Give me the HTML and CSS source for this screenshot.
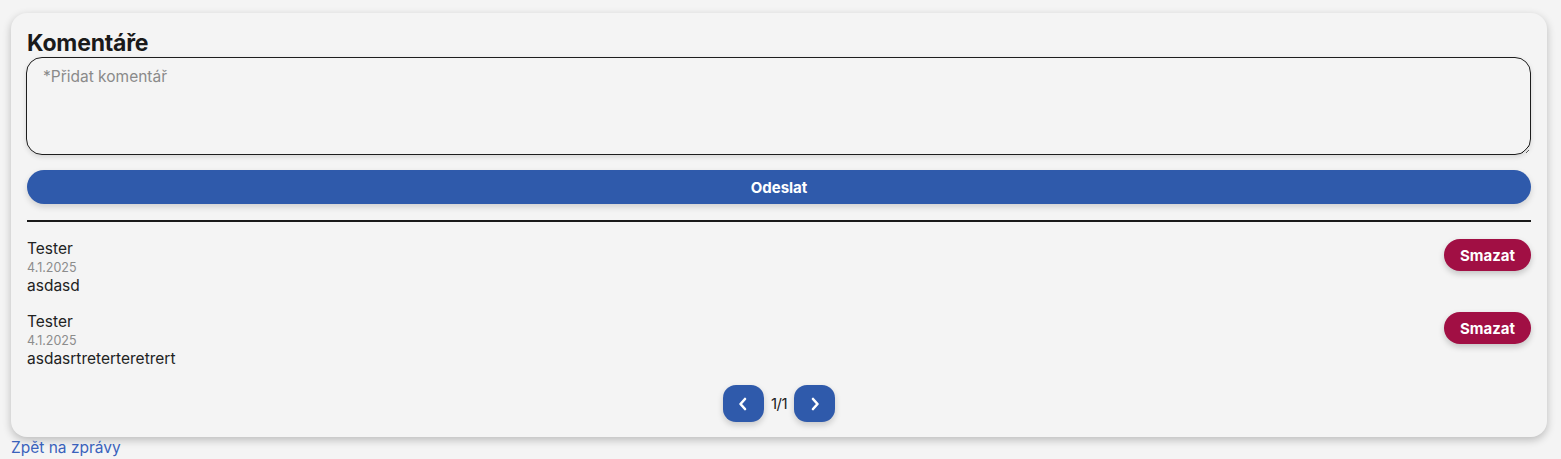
FILE: index.html
```html
<!DOCTYPE html>
<html lang="cs">
<head>
<meta charset="utf-8">
<title>Komentáře</title>
<link rel="stylesheet" href="styles.css">
</head>
<body>
<div class="page">
  <section class="card">
    <h2 class="title">Komentáře</h2>
    <textarea class="input" placeholder="*Přidat komentář"></textarea>
    <button class="send">Odeslat</button>
    <hr class="divider">
    <div class="comments">
      <div class="comment">
        <div class="meta">
          <div class="author">Tester</div>
          <div class="date">4.1.2025</div>
          <div class="text">asdasd</div>
        </div>
        <button class="delete">Smazat</button>
      </div>
      <div class="comment">
        <div class="meta">
          <div class="author">Tester</div>
          <div class="date">4.1.2025</div>
          <div class="text">asdasrtreterteretrert</div>
        </div>
        <button class="delete">Smazat</button>
      </div>
    </div>
    <div class="pager">
      <button class="pbtn" aria-label="Předchozí">
        <svg width="12" height="14" viewBox="0 0 12 14"><path d="M8 2 L3.5 7 L8 12" fill="none" stroke="#fff" stroke-width="2.6" stroke-linecap="round" stroke-linejoin="round"/></svg>
      </button>
      <span class="pinfo">1/1</span>
      <button class="pbtn" aria-label="Další">
        <svg width="12" height="14" viewBox="0 0 12 14"><path d="M4 2 L8.5 7 L4 12" fill="none" stroke="#fff" stroke-width="2.6" stroke-linecap="round" stroke-linejoin="round"/></svg>
      </button>
    </div>
  </section>
  <a class="back" href="#">Zpět na zprávy</a>
</div>
</body>
</html>
```
FILE: styles.css
```css
* { box-sizing: border-box; }
html, body { margin: 0; padding: 0; background: #f4f4f4; }
body { font-family: "Inter", "Noto Sans", sans-serif; color: #1c1c1c; }
.page { padding: 13px 14px 0 11px; display: flex; flex-direction: column; }
.card {
  background: #f4f4f4;
  border-radius: 16px;
  box-shadow: 0 3px 8px rgba(0,0,0,0.24);
  padding: 17px 16px 15px 16px;
  display: flex;
  flex-direction: column;
}
.title { margin: 0; font-size: 23px; font-weight: 700; line-height: 27px; letter-spacing: -0.2px; color: #1a1a1a; }
.input {
  margin: 0 0 15px -1px;
  height: 98px;
  border: 1px solid #1e1e1e;
  border-radius: 16px;
  background: #f4f4f4;
  padding: 9px 16px;
  font-family: inherit;
  font-size: 15.5px;
  color: #1c1c1c;
  resize: vertical;
  box-shadow: 0 2px 5px rgba(0,0,0,0.12);
  outline: none;
}
.input::placeholder { color: #8a8a8a; }
.send {
  height: 34px;
  border: none;
  border-radius: 17px;
  background: #2f5aab;
  color: #fff;
  font-family: inherit;
  font-weight: 700;
  font-size: 15px;
  box-shadow: 0 3px 6px rgba(0,0,0,0.15);
  cursor: pointer;
}
.divider { margin: 16px 0 0 0; border: none; border-top: 2px solid #1a1a1a; height: 0; }
.comments { display: flex; flex-direction: column; gap: 16px; padding-top: 17px; }
.comment { display: flex; justify-content: space-between; align-items: flex-start; }
.meta { display: flex; flex-direction: column; }
.author { font-size: 15.5px; line-height: 20px; color: #222; }
.date { font-size: 12.5px; line-height: 17px; color: #8c8c8c; }
.text { font-size: 15.5px; line-height: 20px; color: #222; }
.delete {
  margin-top: 0;
  height: 32px;
  padding: 0 16px;
  border: none;
  border-radius: 16px;
  background: #a10f44;
  color: #fff;
  font-family: inherit;
  font-weight: 700;
  font-size: 15px;
  box-shadow: 0 3px 6px rgba(0,0,0,0.2);
  cursor: pointer;
}
.pager { display: flex; justify-content: center; align-items: center; gap: 7px; margin-top: 16px; }
.pbtn {
  width: 41px;
  height: 37px;
  border: none;
  border-radius: 13px;
  background: #2f5aab;
  display: flex;
  align-items: center;
  justify-content: center;
  box-shadow: 0 3px 6px rgba(0,0,0,0.18);
  cursor: pointer;
}
.pinfo { font-size: 15px; color: #222; letter-spacing: -0.5px; }
.back { margin-top: 1px; font-size: 15.5px; line-height: 20px; color: #3a62bc; text-decoration: none; align-self: flex-start; }
```
